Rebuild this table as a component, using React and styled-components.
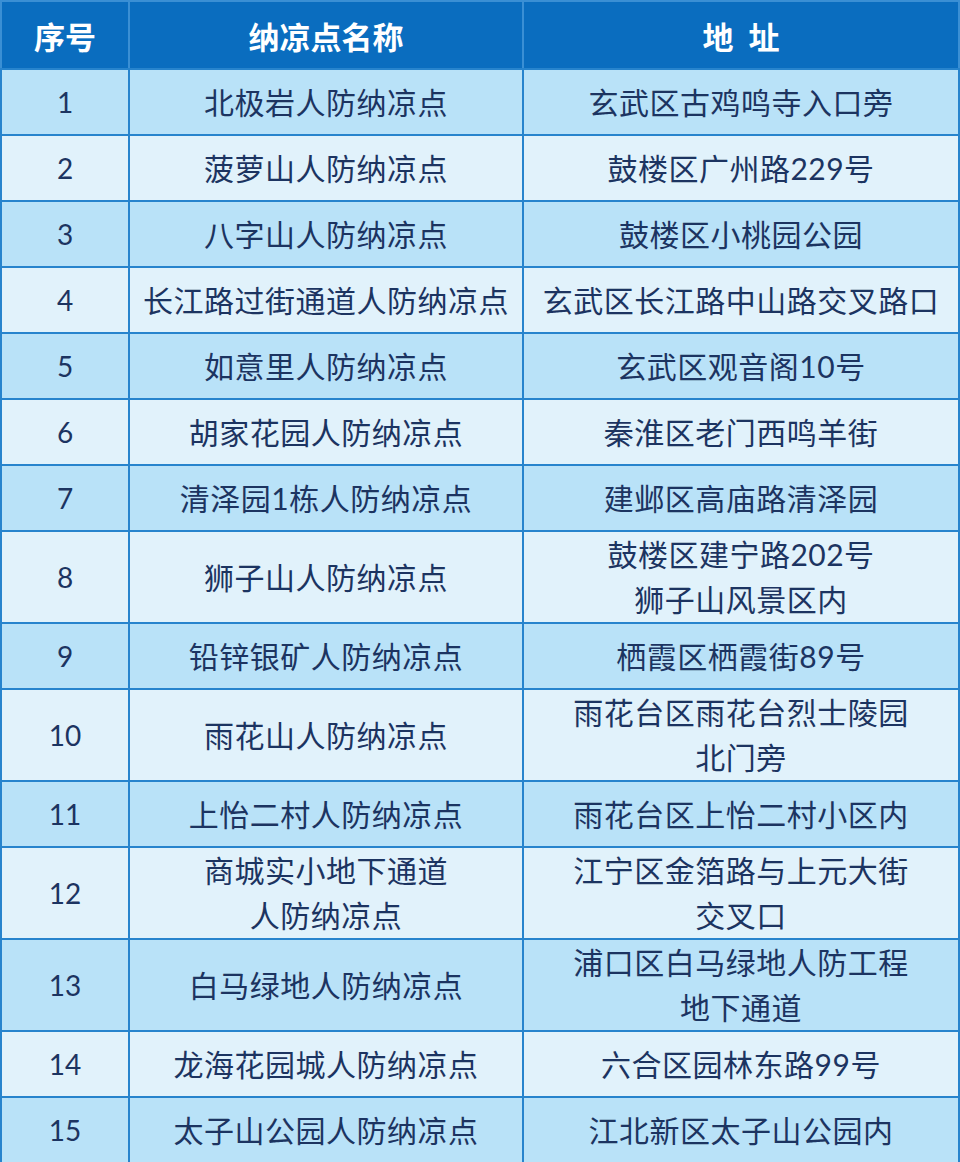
import React from 'react';
import styled, { createGlobalStyle } from 'styled-components';

const GlobalStyle = createGlobalStyle`
  html, body {
    margin: 0;
    padding: 0;
    background: #ffffff;
  }
`;

const line = '#2784cd';

const Table = styled.table`
  width: 960px;
  border-collapse: collapse;
  table-layout: fixed;
  font-family: Lato, "Noto Sans CJK SC", sans-serif;
  color: #1c3461;
  border: 2px solid ${line};
`;

const HeadRow = styled.tr`
  background: #0a6dbf;
  height: 68px;
`;

const HeadCell = styled.th`
  border: 2px solid #3a8fd4;
  border-bottom-color: ${line};
  color: #ffffff;
  font-size: 31px;
  font-weight: 700;
  padding: 0;
  text-align: center;
  white-space: pre;
`;

const Row = styled.tr`
  background: ${(p) => (p.$odd ? '#b9e2f8' : '#e1f2fb')};
  height: 66px;
`;

const Cell = styled.td`
  border: 2px solid ${line};
  font-size: 30px;
  line-height: 45px;
  padding: 0;
  text-align: center;
  letter-spacing: 0.5px;
`;

const Num = styled(Cell)`
  font-size: 28px;
  letter-spacing: 0;
`;

const rows = [
  ['1', '北极岩人防纳凉点', '玄武区古鸡鸣寺入口旁'],
  ['2', '菠萝山人防纳凉点', '鼓楼区广州路229号'],
  ['3', '八字山人防纳凉点', '鼓楼区小桃园公园'],
  ['4', '长江路过街通道人防纳凉点', '玄武区长江路中山路交叉路口'],
  ['5', '如意里人防纳凉点', '玄武区观音阁10号'],
  ['6', '胡家花园人防纳凉点', '秦淮区老门西鸣羊街'],
  ['7', '清泽园1栋人防纳凉点', '建邺区高庙路清泽园'],
  ['8', '狮子山人防纳凉点', ['鼓楼区建宁路202号', '狮子山风景区内']],
  ['9', '铅锌银矿人防纳凉点', '栖霞区栖霞街89号'],
  ['10', '雨花山人防纳凉点', ['雨花台区雨花台烈士陵园', '北门旁']],
  ['11', '上怡二村人防纳凉点', '雨花台区上怡二村小区内'],
  ['12', ['商城实小地下通道', '人防纳凉点'], ['江宁区金箔路与上元大街', '交叉口']],
  ['13', '白马绿地人防纳凉点', ['浦口区白马绿地人防工程', '地下通道']],
  ['14', '龙海花园城人防纳凉点', '六合区园林东路99号'],
  ['15', '太子山公园人防纳凉点', '江北新区太子山公园内'],
];

function Lines({ value }) {
  if (!Array.isArray(value)) return value;
  return value.map((v, i) => (
    <React.Fragment key={i}>
      {i > 0 && <br />}
      {v}
    </React.Fragment>
  ));
}

export default function App() {
  return (
    <>
      <GlobalStyle />
      <Table>
        <colgroup>
          <col style={{ width: '128px' }} />
          <col style={{ width: '394px' }} />
          <col />
        </colgroup>
        <thead>
          <HeadRow>
            <HeadCell>序号</HeadCell>
            <HeadCell>纳凉点名称</HeadCell>
            <HeadCell>{'地  址'}</HeadCell>
          </HeadRow>
        </thead>
        <tbody>
          {rows.map((r, i) => (
            <Row key={r[0]} $odd={i % 2 === 0}>
              <Num>{r[0]}</Num>
              <Cell><Lines value={r[1]} /></Cell>
              <Cell><Lines value={r[2]} /></Cell>
            </Row>
          ))}
        </tbody>
      </Table>
    </>
  );
}
